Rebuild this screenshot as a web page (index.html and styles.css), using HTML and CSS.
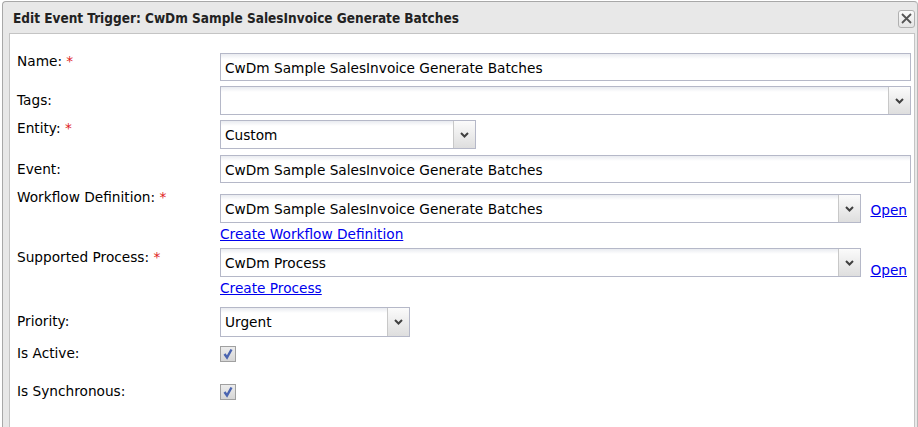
FILE: index.html
```html
<!DOCTYPE html>
<html>
<head>
<meta charset="utf-8">
<link rel="stylesheet" href="styles.css">
</head>
<body>
<div class="dialog">
  <div class="titlebar">
    <span class="title">Edit Event Trigger: CwDm Sample SalesInvoice Generate Batches</span>
    <span class="close"><svg width="11" height="11" viewBox="0 0 11 11"><path d="M1 1L10 10M10 1L1 10" stroke="#555" stroke-width="1.8" fill="none"/></svg></span>
  </div>
  <div class="content">
    <div class="row r-name">
      <div class="label">Name: <span class="req">*</span></div>
      <div class="field"><div class="input full">CwDm Sample SalesInvoice Generate Batches</div></div>
    </div>
    <div class="row r-tags">
      <div class="label">Tags:</div>
      <div class="field"><div class="combo full"><div class="combo-text"></div><div class="trigger"><svg width="9" height="6" viewBox="0 0 9 6"><path d="M1 1L4.5 4.5L8 1" stroke="#404040" stroke-width="2" fill="none"/></svg></div></div></div>
    </div>
    <div class="row r-entity">
      <div class="label">Entity: <span class="req">*</span></div>
      <div class="field"><div class="combo w-entity"><div class="combo-text">Custom</div><div class="trigger"><svg width="9" height="6" viewBox="0 0 9 6"><path d="M1 1L4.5 4.5L8 1" stroke="#404040" stroke-width="2" fill="none"/></svg></div></div></div>
    </div>
    <div class="row r-event">
      <div class="label">Event:</div>
      <div class="field"><div class="input full">CwDm Sample SalesInvoice Generate Batches</div></div>
    </div>
    <div class="row r-wf">
      <div class="label">Workflow Definition: <span class="req">*</span></div>
      <div class="field stacked f-wf">
        <div class="with-link">
          <div class="combo grow"><div class="combo-text">CwDm Sample SalesInvoice Generate Batches</div><div class="trigger"><svg width="9" height="6" viewBox="0 0 9 6"><path d="M1 1L4.5 4.5L8 1" stroke="#404040" stroke-width="2" fill="none"/></svg></div></div>
          <a class="open" href="#">Open</a>
        </div>
        <a class="create" href="#">Create Workflow Definition</a>
      </div>
    </div>
    <div class="row r-proc">
      <div class="label">Supported Process: <span class="req">*</span></div>
      <div class="field stacked f-proc">
        <div class="with-link">
          <div class="combo grow"><div class="combo-text">CwDm Process</div><div class="trigger"><svg width="9" height="6" viewBox="0 0 9 6"><path d="M1 1L4.5 4.5L8 1" stroke="#404040" stroke-width="2" fill="none"/></svg></div></div>
          <a class="open" href="#">Open</a>
        </div>
        <a class="create" href="#">Create Process</a>
      </div>
    </div>
    <div class="row r-prio">
      <div class="label">Priority:</div>
      <div class="field"><div class="combo w-prio"><div class="combo-text">Urgent</div><div class="trigger"><svg width="9" height="6" viewBox="0 0 9 6"><path d="M1 1L4.5 4.5L8 1" stroke="#404040" stroke-width="2" fill="none"/></svg></div></div></div>
    </div>
    <div class="row r-active">
      <div class="label">Is Active:</div>
      <div class="field"><span class="check"><svg width="12" height="12" viewBox="0 0 12 12"><path d="M2.5 6L5 9.5L9.5 1.5" stroke="#4a64b0" stroke-width="2.4" fill="none"/></svg></span></div>
    </div>
    <div class="row r-sync">
      <div class="label">Is Synchronous:</div>
      <div class="field"><span class="check"><svg width="12" height="12" viewBox="0 0 12 12"><path d="M2.5 6L5 9.5L9.5 1.5" stroke="#4a64b0" stroke-width="2.4" fill="none"/></svg></span></div>
    </div>
  </div>
</div>
</body>
</html>
```

FILE: styles.css
```css
html, body {
  margin: 0;
  padding: 0;
  background: #ffffff;
}
body {
  font-family: "DejaVu Sans", sans-serif;
  font-size: 13.7px;
  color: #000;
  overflow: hidden;
}
.dialog {
  margin: 1px 0 0 2px;
  height: 440px;
  border: 1px solid #a8a8a8;
  border-right-color: #b8b8b8;
  border-top-left-radius: 4px;
  border-top-right-radius: 4px;
  background: #e8e8e8;
  display: flex;
  flex-direction: column;
  padding: 0 2px 0 6px;
}
.titlebar {
  height: 31px;
  display: flex;
  align-items: center;
  justify-content: space-between;
}
.title {
  font-family: "DejaVu Sans Condensed", "DejaVu Sans", sans-serif;
  font-stretch: condensed;
  font-weight: bold;
  font-size: 13.5px;
  color: #222;
  margin-left: 4px;
  margin-top: 1px;
}
.close {
  width: 15px;
  height: 16px;
  border: 1px solid #b0b0b0;
  border-radius: 3px;
  background: linear-gradient(#fbfbfb, #e4e4e4);
  display: flex;
  align-items: center;
  justify-content: center;
  margin-top: 2px;
}
.content {
  flex: 1;
  background: #fff;
  border: 1px solid #c4c4c4;
  padding: 19px 3px 0 7px;
}
.row {
  display: flex;
  align-items: flex-start;
}
.label {
  width: 203px;
  flex: none;
  line-height: 17px;
  white-space: nowrap;
}
.req {
  color: #e02020;
}
.field {
  flex: 1;
  display: flex;
  min-width: 0;
}
.stacked {
  flex-direction: column;
}
.input, .combo {
  box-sizing: border-box;
  height: 28px;
  border: 1px solid #b5b8c8;
  background: linear-gradient(#e9ebf0, #ffffff 5px);
  line-height: 17px;
  padding: 6px 4px 0 4px;
  white-space: nowrap;
  overflow: hidden;
}
.combo {
  display: flex;
  padding: 0;
  height: 29px;
}
.combo-text {
  flex: 1;
  padding: 6px 4px 0 4px;
  line-height: 17px;
  overflow: hidden;
}
.trigger {
  width: 21px;
  flex: none;
  border-left: 1px solid #c8c8c8;
  background: linear-gradient(#fbfbfb, #dedede);
  display: flex;
  align-items: center;
  justify-content: center;
}
.full { flex: 1; }
.w-entity { width: 256px; }
.w-prio { width: 190px; height: 30px; }
.with-link {
  display: flex;
  align-items: flex-end;
}
.grow { flex: 1; }
.open {
  flex: none;
  margin-left: 9px;
  margin-right: 4px;
  line-height: 17px;
  color: #0000ee;
}
.f-wf .open { margin-bottom: 4px; }
.f-proc .open { margin-bottom: -2px; }
.create {
  color: #0000ee;
  line-height: 17px;
  align-self: flex-start;
  margin-top: 3px;
}
.r-tags { margin-top: 5px; }
.r-tags .label { padding-top: 6px; }
.r-entity { margin-top: 5px; }
.r-event { margin-top: 6px; }
.r-event .label { padding-top: 6px; }
.r-wf { margin-top: 4px; }
.r-wf .label { padding-top: 2px; }
.f-wf { margin-top: 7px; }
.r-proc { margin-top: 4px; }
.r-proc .label { padding-top: 2px; }
.f-proc { margin-top: 1px; }
.r-prio { margin-top: 10px; }
.r-prio .label { padding-top: 6px; }
.r-active { margin-top: 8px; }
.r-sync { margin-top: 21px; }
.check {
  box-sizing: border-box;
  width: 16px;
  height: 16px;
  margin-top: 1px;
  border: 1px solid #a0a0a0;
  background: linear-gradient(#ececec, #d6d6d6);
  display: flex;
  align-items: center;
  justify-content: center;
}
```
